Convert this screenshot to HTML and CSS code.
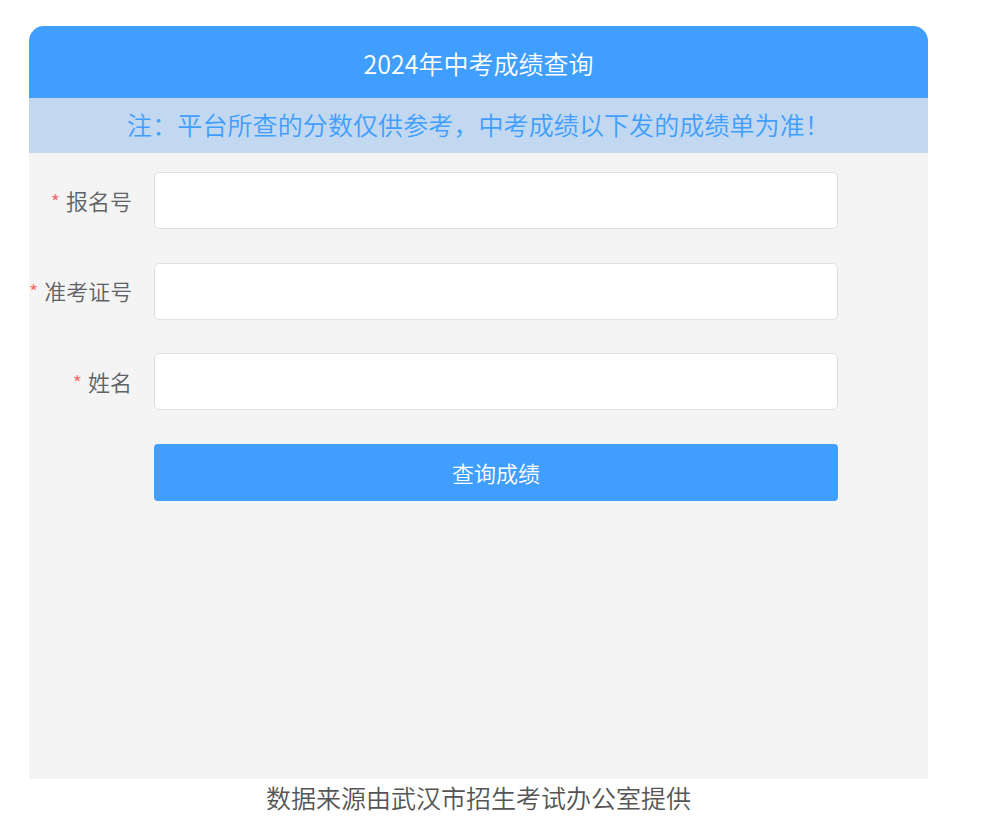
FILE: index.html
```html
<!DOCTYPE html>
<html lang="zh-CN">
<head>
<meta charset="utf-8">
<title>2024年中考成绩查询</title>
<link rel="stylesheet" href="styles.css">
</head>
<body>
<div class="page">
  <div class="card">
    <div class="card-header">2024年中考成绩查询</div>
    <div class="notice">注：平台所查的分数仅供参考，中考成绩以下发的成绩单为准！</div>
    <form class="form">
      <div class="row">
        <label class="label"><span class="star">*</span>报名号</label>
        <input class="input" type="text">
      </div>
      <div class="row">
        <label class="label"><span class="star">*</span>准考证号</label>
        <input class="input" type="text">
      </div>
      <div class="row">
        <label class="label"><span class="star">*</span>姓名</label>
        <input class="input" type="text">
      </div>
      <div class="row">
        <span class="label"></span>
        <button class="btn" type="button">查询成绩</button>
      </div>
    </form>
  </div>
  <div class="footer">数据来源由武汉市招生考试办公室提供</div>
</div>
</body>
</html>
```

FILE: styles.css
```css
html, body {
  margin: 0;
  padding: 0;
  background: #ffffff;
  font-family: "Noto Sans CJK SC", "Noto Sans", sans-serif;
  font-weight: 350;
}
.page {
  padding: 26px 0 0 29px;
  width: 899px;
}
.card {
  width: 899px;
  background: #f4f4f4;
  border-radius: 15px 15px 0 0;
  overflow: hidden;
  height: 753px;
  display: flex;
  flex-direction: column;
}
.card-header {
  height: 72px;
  background: #409eff;
  color: #ffffff;
  font-size: 25px;
  line-height: 74px;
  text-align: center;
}
.notice {
  height: 55px;
  background: #c1d8f0;
  color: #409eff;
  font-size: 25px;
  line-height: 53px;
  text-align: center;
  letter-spacing: 0.1px;
}
.form {
  padding-top: 19px;
  display: flex;
  flex-direction: column;
  gap: 33.6px;
}
.row {
  display: flex;
  align-items: center;
}
.label {
  width: 103px;
  padding-right: 22px;
  text-align: right;
  color: #606266;
  font-size: 22px;
  line-height: 30px;
  white-space: nowrap;
}
.star {
  color: #f56c6c;
  font-size: 20px;
  margin-right: 6px;
}
.input {
  box-sizing: border-box;
  width: 684px;
  height: 57px;
  margin: 0;
  border: 1px solid #dcdfe6;
  border-radius: 5px;
  background: #ffffff;
  outline: none;
  padding: 0 15px;
  font-size: 20px;
}
.btn {
  width: 684px;
  height: 57px;
  margin: 0;
  border: none;
  border-radius: 4px;
  background: #409eff;
  color: #ffffff;
  font-family: "Noto Sans CJK SC", "Noto Sans", sans-serif;
  font-weight: 350;
  font-size: 22px;
  line-height: 55px;
  padding: 0;
}
.footer {
  text-align: center;
  color: #555555;
  font-size: 25px;
  line-height: 36px;
}
```
